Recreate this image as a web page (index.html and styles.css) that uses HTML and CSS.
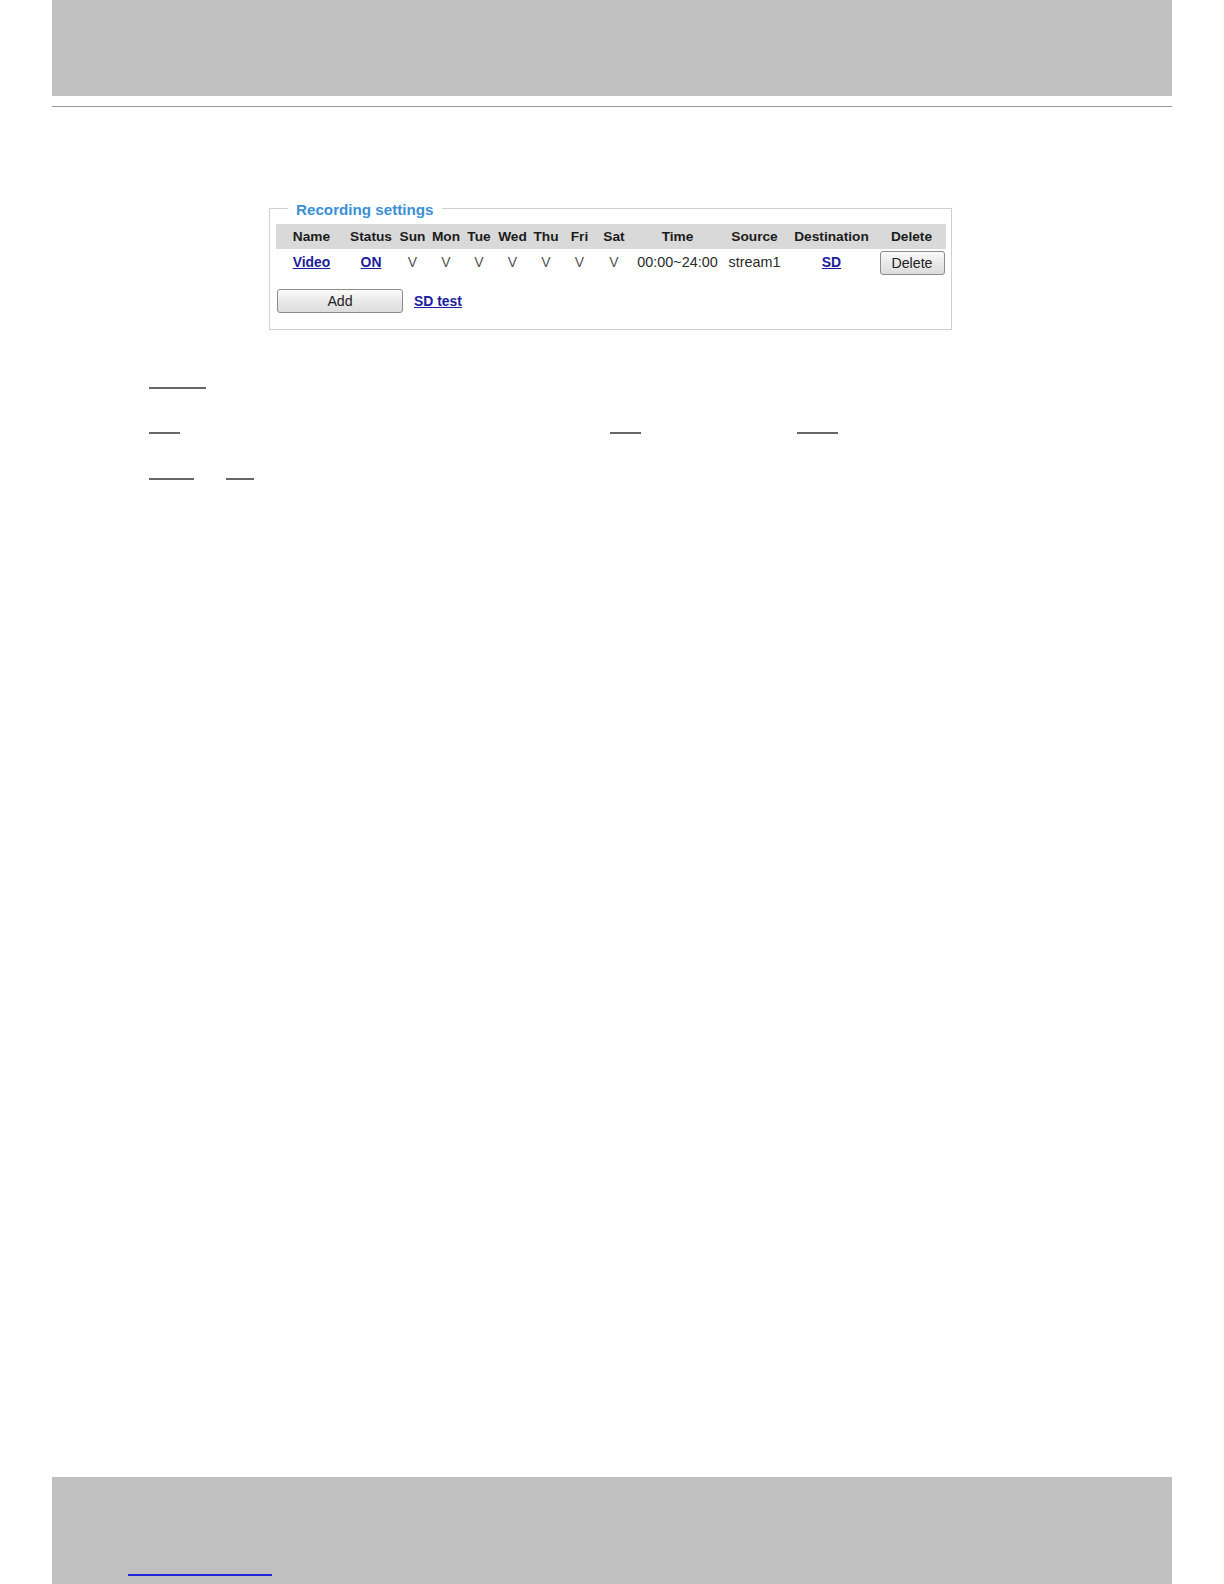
FILE: index.html
```html
<!DOCTYPE html>
<html>
<head>
<meta charset="utf-8">
<title>Recording settings</title>
<link rel="stylesheet" href="styles.css">
</head>
<body>
<div class="page">
  <div class="wrap">
    <div class="top-band"></div>
    <div class="top-rule"></div>

    <fieldset class="rec">
      <legend class="rec-legend">Recording settings</legend>
      <table class="rec-table">
        <colgroup>
          <col class="c-name"><col class="c-status"><col class="c-sun"><col class="c-mon"><col class="c-tue"><col class="c-wed"><col class="c-thu"><col class="c-fri"><col class="c-sat"><col class="c-time"><col class="c-source"><col class="c-dest"><col class="c-del">
        </colgroup>
        <thead>
          <tr class="head-row">
            <th>Name</th><th>Status</th><th>Sun</th><th>Mon</th><th>Tue</th><th>Wed</th><th>Thu</th><th>Fri</th><th>Sat</th><th>Time</th><th>Source</th><th>Destination</th><th>Delete</th>
          </tr>
        </thead>
        <tbody>
          <tr class="data-row">
            <td><a class="lnk" href="#">Video</a></td>
            <td><a class="lnk" href="#">ON</a></td>
            <td class="v">V</td><td class="v">V</td><td class="v">V</td><td class="v">V</td><td class="v">V</td><td class="v">V</td><td class="v">V</td>
            <td class="txt">00:00~24:00</td>
            <td class="txt">stream1</td>
            <td><a class="lnk" href="#">SD</a></td>
            <td class="del-cell"><button class="btn btn-del" type="button">Delete</button></td>
          </tr>
        </tbody>
      </table>
      <div class="actions">
        <button class="btn btn-add" type="button">Add</button>
        <a class="lnk" href="#">SD test</a>
      </div>
    </fieldset>

    <div class="notes">
      <div class="note-row"><span class="uline w56"></span></div>
      <div class="note-row"><span class="uline w31"></span><span class="uline w31 g430"></span><span class="uline w41 g156"></span></div>
      <div class="note-row"><span class="uline w45"></span><span class="uline w28 g32"></span></div>
    </div>
  </div>

  <div class="wrap foot-wrap">
    <div class="bottom-band"><span class="foot-link"></span></div>
  </div>
</div>
</body>
</html>
```

FILE: styles.css
```css
html, body {
  margin: 0;
  padding: 0;
  background: #ffffff;
}

body {
  font-family: "Liberation Sans", Arial, sans-serif;
  color: #222;
}

.page {
  min-height: 1584px;
  display: flex;
  flex-direction: column;
}

.wrap {
  width: 1120px;
  margin: 0 52px;
}

.top-band {
  height: 96px;
  background: #c0c0c0;
}

.top-rule {
  margin-top: 10px;
  height: 1px;
  background: #999999;
}

.rec {
  box-sizing: border-box;
  width: 683px;
  margin: 90px 0 0 217px;
  padding: 5px 6px 16px 6px;
  border: 1px solid #cfcfcf;
  min-width: 0;
}

.rec-legend {
  margin-left: 12px;
  padding: 4px 8px 0 8px;
  font-size: 15.2px;
  line-height: 18px;
  font-weight: bold;
  color: #3a8fd6;
}

.rec-table {
  width: 670px;
  table-layout: fixed;
  border-collapse: collapse;
}

.c-name { width: 71px; }
.c-status { width: 48px; }
.c-sun { width: 35px; }
.c-mon { width: 32px; }
.c-tue { width: 34px; }
.c-wed { width: 33px; }
.c-thu { width: 34px; }
.c-fri { width: 33px; }
.c-sat { width: 36px; }
.c-time { width: 91px; }
.c-source { width: 63px; }
.c-dest { width: 91px; }
.c-del { width: 69px; }

.head-row th {
  height: 25px;
  padding: 0;
  background: #d9d9d9;
  font-size: 13.7px;
  font-weight: bold;
  color: #1c1c1c;
  text-align: center;
  white-space: nowrap;
}

.data-row td {
  height: 25px;
  padding: 0;
  text-align: center;
  vertical-align: middle;
  white-space: nowrap;
  font-size: 14px;
}

.data-row td.del-cell {
  vertical-align: top;
}

.data-row td.v {
  color: #555;
}

.data-row td.txt {
  color: #2a2a2a;
  font-size: 14.4px;
}

.lnk {
  color: #1c1c9e;
  font-weight: bold;
  font-size: 13.9px;
  text-decoration: underline;
}

.btn {
  box-sizing: border-box;
  font-family: "Liberation Sans", Arial, sans-serif;
  font-size: 14.2px;
  color: #222;
  border: 1px solid #8c8c8c;
  border-radius: 3px;
  background: linear-gradient(#fbfbfb, #e9e9e9 50%, #dcdcdc);
  padding: 0;
}

.btn-del {
  width: 65px;
  height: 24px;
  margin-left: 1px;
  margin-top: 2px;
}

.actions {
  display: flex;
  align-items: center;
  gap: 11px;
  margin-top: 14px;
  padding-left: 1px;
}

.btn-add {
  width: 126px;
  height: 24px;
}

.notes {
  margin-top: 57px;
  padding-left: 97px;
  display: flex;
  flex-direction: column;
}

.note-row {
  height: 45px;
  display: flex;
  align-items: flex-start;
}

.note-row + .note-row + .note-row {
  margin-top: 1px;
}

.uline {
  display: block;
  height: 2px;
  background: #666666;
}

.w56 { width: 57px; }
.w31 { width: 31px; }
.w41 { width: 41px; }
.w45 { width: 45px; }
.w28 { width: 28px; }
.g430 { margin-left: 430px; }
.g156 { margin-left: 156px; }
.g32 { margin-left: 32px; }

.foot-wrap {
  margin-top: auto;
}

.bottom-band {
  height: 107px;
  background: #c0c0c0;
  display: flex;
  align-items: flex-end;
}

.foot-link {
  display: block;
  width: 144px;
  height: 2px;
  margin: 0 0 8px 76px;
  background: #2424d8;
}
```
